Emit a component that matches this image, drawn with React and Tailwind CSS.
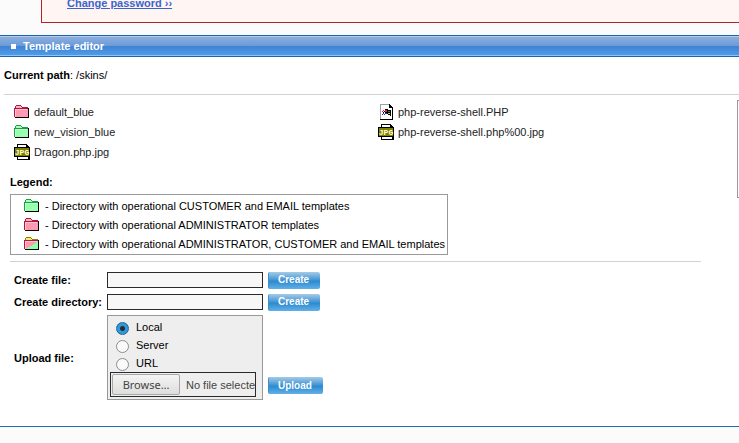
import { useRef, useState } from "react";

const FOLDER_COLORS = {
  pink: { edge: "#b01840", fill: "#ff9aae", tab: "#ffb3c2", shine: "#ffc4cf", dither: "#ff9ad8" },
  green: { edge: "#18a048", fill: "#97ffa9", tab: "#a9ffb8", shine: "#c4ffce", dither: "#9dffc4" },
  mixed: { edge: "#b01840", fill: "#ff9aae", tab: "#f4ec6a", shine: "#ffc4cf", dither: "#8dffa8" },
};

function FolderIcon({ kind }) {
  const c = FOLDER_COLORS[kind];
  return (
    <svg width="16" height="14" viewBox="0 0 16 14" shapeRendering="crispEdges" aria-hidden="true" className="shrink-0">
      <path d="M0 3h1V1h1V0h5v1h1v1h6v2H0z" fill={kind === "mixed" ? "#8c7a10" : c.edge} />
      <path d="M0 3h14v10H1v-1H0z" fill={c.edge} />
      <path d="M2 1h5v1h1v1H2z" fill={c.tab} />
      <path d="M1 4h13v8H1z" fill={c.fill} />
      <path d="M1 4h12v1H2v7H1z" fill={c.shine} />
      {kind === "mixed" ? (
        <path d="M14 4h-1v1h-1v1h-1v1h-2v1H8v1H6v1H4v1H2v1h12z" fill={c.dither} />
      ) : (
        <path d="M12 5h1v1h-1zM10 7h1v1h-1zM12 7h1v1h-1zM9 8h1v1H9zM11 8h1v1h-1zM8 9h1v1H8zM10 9h1v1h-1zM12 9h1v1h-1zM7 10h1v1H7zM9 10h1v1H9zM11 10h1v1h-1zM13 10h1v1h-1z" fill={c.dither} />
      )}
      <path d="M14 3h1v10H1v-1h13z" fill="#000" />
    </svg>
  );
}

function JpgIcon() {
  return (
    <svg width="16" height="16" viewBox="0 0 16 16" shapeRendering="crispEdges" aria-hidden="true" className="shrink-0">
      <path d="M3 0h10v1h1v1h1v1h1v13H3z" fill="#000" />
      <path d="M4 1h8v3h2v11H4z" fill="#fff" />
      <path d="M0 3h16v10H0z" fill="#000" />
      <path d="M1 4h14v8H1z" fill="#808000" />
      <text x="8" y="11" textAnchor="middle" fontSize="8" fontWeight="700" fill="#ffffd8" fontFamily="Liberation Mono, monospace">JPG</text>
    </svg>
  );
}

function PhpIcon() {
  return (
    <svg width="16" height="16" viewBox="0 0 16 16" shapeRendering="crispEdges" aria-hidden="true" className="shrink-0">
      <path d="M2 0h9l4 4v12H2z" fill="#a0a0a0" />
      <path d="M3 1h8v3h3v11H3z" fill="#fff" />
      <path d="M11 0h1v1h1v1h1v1h1v13H2v-1h12V4h-3z" fill="#000" />
      <path d="M7 5h3v1h3v6h-1v-1h-2v-1H7z" fill="#000" />
      <path d="M7 6h2v2H7zM5 6h1v1H5zM4 7h1v1H4z" fill="#f01030" />
      <path d="M10 7h2v1h-2z" fill="#109040" />
      <path d="M7 9h2v1H7zM5 9h1v1H5zM4 10h1v1H4zM6 10h1v1H6z" fill="#1030e0" />
      <path d="M10 9h2v1h-2z" fill="#e8d020" />
      <path d="M6 7h1v1H6zM5 8h1v1H5z" fill="#000" />
    </svg>
  );
}

function FileEntry({ icon, name }) {
  return (
    <li className="flex h-5 items-center gap-1">
      <span className="flex w-4 justify-end">{icon}</span>
      <a href="#file" className="text-[#222]">{name}</a>
    </li>
  );
}

function LegendRow({ kind, children }) {
  return (
    <li className="flex h-[19px] items-center gap-[5px] leading-3 whitespace-nowrap">
      <FolderIcon kind={kind} />
      <span>- {children}</span>
    </li>
  );
}

function ActionButton({ children }) {
  return (
    <button
      type="button"
      className="h-[17px] rounded-xs border-l border-[#3f8fc8] bg-linear-to-b from-[#a3cbe6] via-[#2a8bd0] via-55% to-[#62b0e8] pr-[11px] pl-[9px] text-[10px] leading-4 font-bold text-white"
    >
      {children}
    </button>
  );
}

function CreateRow({ id, label }) {
  return (
    <div className="flex h-[22px] items-center">
      <label htmlFor={id} className="w-[93px] font-bold whitespace-nowrap">{label}</label>
      <input id={id} type="text" className="mr-[5px] h-4 w-[156px] border border-[#2b2b2b] bg-[#f7f7f7] px-1" />
      <ActionButton>Create</ActionButton>
    </div>
  );
}

function UploadRow() {
  const [source, setSource] = useState("Local");
  const picker = useRef(null);
  return (
    <div className="mt-[2px] flex items-center">
      <span id="upload-label" className="w-[93px] font-bold">Upload file:</span>
      <div role="group" aria-labelledby="upload-label" className="mr-[5px] w-[156px] border border-[#999] bg-[#eee] p-[2px]">
        {["Local", "Server", "URL"].map((name) => (
          <label key={name} className="flex h-[18px] items-center pl-[6px] leading-[18px]">
            <input
              type="radio"
              name="source"
              checked={source === name}
              onChange={() => setSource(name)}
              className="mt-[2px] mr-[7px] size-[13px] appearance-none rounded-full border border-[#8c8c8c] bg-[#fafafa] checked:border-[#22618c] checked:bg-[radial-gradient(circle,#2b2b2b_0_2px,#2e9ade_3px)]"
            />
            {name}
          </label>
        ))}
        <div className="flex h-[25px] w-[146px] items-center overflow-hidden border border-[#2b2b2b] px-px whitespace-nowrap text-[#444]">
          <button
            type="button"
            onClick={() => picker.current.click()}
            className="mr-[6px] h-[21px] w-[68px] shrink-0 rounded-xs border border-[#a8a8a8] bg-linear-to-b from-[#f4f4f4] to-[#dedede] font-['Noto_Sans',sans-serif] text-[11px] leading-4 text-[#444]"
          >
            Browse…
          </button>
          <span>No file selected.</span>
          <input ref={picker} type="file" aria-labelledby="upload-label" tabIndex={-1} className="hidden" />
        </div>
      </div>
      <div className="self-end pb-[6px]">
        <div className="flex"><ActionButton>Upload</ActionButton></div>
      </div>
    </div>
  );
}

export default function App() {
  return (
    <div className="min-h-screen overflow-hidden bg-[#fbfbfb] font-['Liberation_Sans',Arial,sans-serif] text-[11px] leading-[14px] text-black">
      <div className="ml-[41px] flex h-[23px] items-start border-b border-l border-[#b92025] bg-[#fff6f3] pl-[25px]">
        <a href="#password" className="-mt-1 font-bold text-[#3c64cc] underline">Change password ››</a>
      </div>

      <header className="mt-3 border-y border-[#1d63b3]">
        <div className="flex h-5 items-center border-t border-b border-t-[#b4cdea] border-b-[#8cc4f4] bg-[linear-gradient(#8aaedd,#6c9ad8_50%,#3f83d2_50%,#4f9bea)] pl-[11px]">
          <span className="mr-[7px] size-[5px] bg-white" />
          <h1 className="font-bold text-white">Template editor</h1>
        </div>
      </header>

      <main className="border-b border-[#2468b8] bg-white pb-[26px] pl-1">
        <p className="pt-[11px] pb-3"><b>Current path</b>: /skins/</p>
        <hr className="border-[#cdd3d7]" />

        <div className="flex pt-[5px] pl-[6px]">
          <div className="min-w-0 flex-1">
            <div className="grid grid-cols-2 gap-x-[5px] pt-[2px] pl-1">
              <ul>
                <FileEntry icon={<FolderIcon kind="pink" />} name="default_blue" />
                <FileEntry icon={<FolderIcon kind="green" />} name="new_vision_blue" />
                <FileEntry icon={<JpgIcon />} name="Dragon.php.jpg" />
              </ul>
              <ul>
                <FileEntry icon={<PhpIcon />} name="php-reverse-shell.PHP" />
                <FileEntry icon={<JpgIcon />} name="php-reverse-shell.php%00.jpg" />
              </ul>
            </div>
            <h2 className="mt-[13px] font-bold">Legend:</h2>
            <ul className="mt-[5px] w-fit border border-[#999] py-px pr-[2px] pl-[13px]">
              <LegendRow kind="green">Directory with operational CUSTOMER and EMAIL templates</LegendRow>
              <LegendRow kind="pink">Directory with operational ADMINISTRATOR templates</LegendRow>
              <LegendRow kind="mixed">Directory with operational ADMINISTRATOR, CUSTOMER and EMAIL templates</LegendRow>
            </ul>
          </div>
          <aside className="h-[98px] w-[2px] border-y border-l border-[#999]" />
        </div>

        <hr className="mt-[6px] mr-[38px] ml-[6px] border-[#d0d3d3]" />
        <form className="pt-[7px] pl-[10px]">
          <CreateRow id="new-file" label="Create file:" />
          <CreateRow id="new-directory" label="Create directory:" />
          <UploadRow />
        </form>
      </main>
    </div>
  );
}
